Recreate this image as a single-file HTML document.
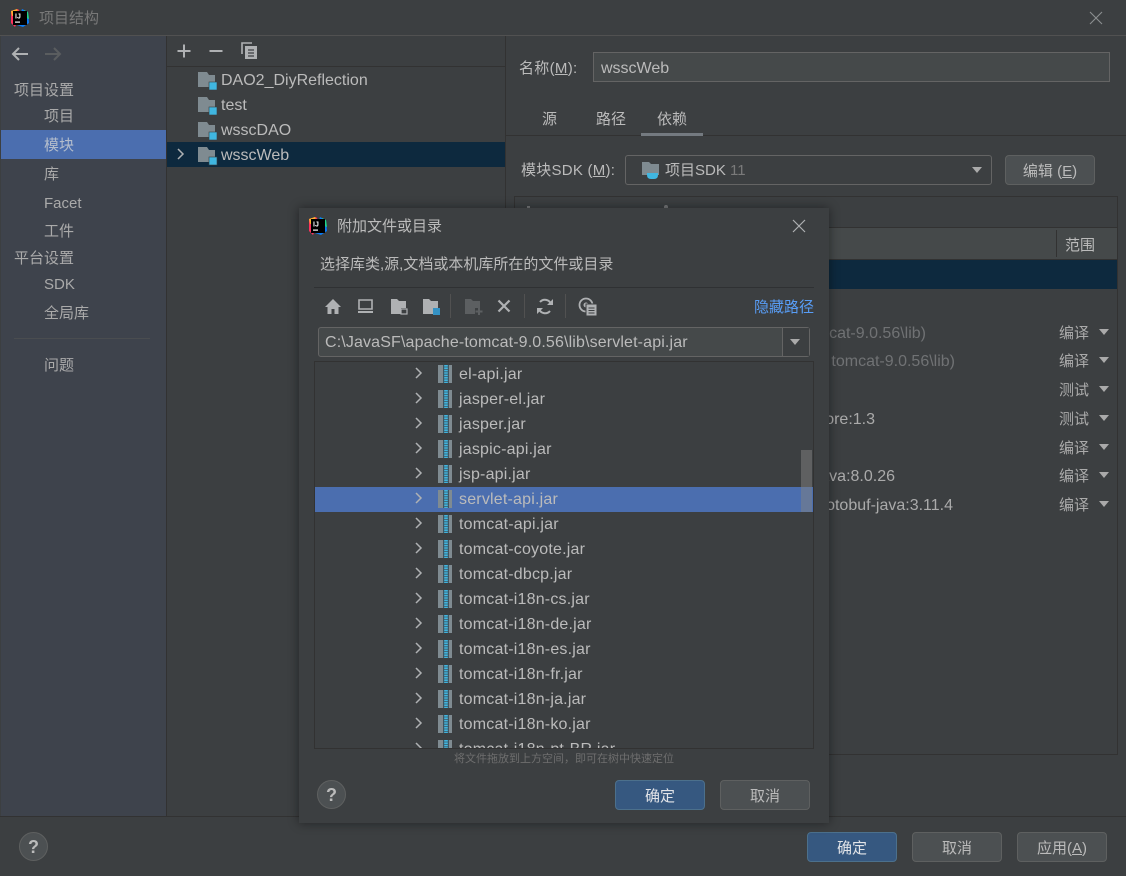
<!DOCTYPE html>
<html lang="zh"><head><meta charset="utf-8"><title>项目结构</title>
<style>
html,body{margin:0;padding:0}
body{width:1126px;height:876px;overflow:hidden;background:#3c3f41;position:relative;font:15px "Liberation Sans","Noto Sans CJK SC",sans-serif;color:#bbb}
.a,.t,svg{position:absolute}
.t{white-space:nowrap;line-height:20px;height:20px;margin-top:4px}
.g{color:#aaa}
.d{color:#707274}
.m{font-size:16px;margin-top:3px}
.btn{position:absolute;box-sizing:border-box;width:90px;height:30px;border:1px solid #5e6060;border-radius:4px;background:#4c5052;text-align:center;line-height:31px;color:#bbb;font-size:15px}
.btn.p{background:#365880;border-color:#4c708c;color:#e2e4e8}
.help{position:absolute;box-sizing:border-box;width:29px;height:29px;border:1px solid #5e6060;border-radius:50%;background:#4c5052;text-align:center;line-height:28px;font-weight:bold;font-size:18px;color:#bbb}
.sc{font-size:15px;color:#aaa}
.tri{position:absolute;width:0;height:0;border-left:5.5px solid transparent;border-right:5.5px solid transparent;border-top:6px solid #aaa}
.r{height:25px;position:absolute;left:0;right:0;margin-top:1px}
.r svg{top:3px}
.r .c{left:99px;top:5px}
.r .j{left:123px}
.r span{position:absolute;left:144px;top:3px;line-height:20px;white-space:nowrap;color:#bbb;font-size:16px;letter-spacing:.2px}
</style></head><body>
<svg width="0" height="0" style="position:absolute"><defs>
<symbol id="mod" viewBox="0 0 20 20"><path d="M0 1h9l2 3h6v12H0z" fill="#7f8b91"/><rect x="11" y="11" width="8" height="8" fill="#40b6e0" stroke="#3c3f41" stroke-width=".6"/></symbol>
<symbol id="jar" viewBox="0 0 14 18"><rect x="0" y="0" width="14" height="18" fill="#7f8b91"/><rect x="5" y="0" width="6" height="18" fill="#3f5560"/><path d="M8 0v18" stroke="#40b6e0" stroke-width="3.6" stroke-dasharray="1.6 .8"/></symbol>
<symbol id="chev" viewBox="0 0 10 12"><path d="M2 1l5 5-5 5" fill="none" stroke="#afb1b3" stroke-width="1.5"/></symbol>
<symbol id="logo" viewBox="0 0 20 20"><path d="M1 3l7-2 3 4-6 14-4-4z" fill="#fe315d"/><path d="M1 3l6-2 2 6-7 1z" fill="#fcb22e"/><path d="M12 1l6 3 1 11-6 4-6-2z" fill="#087cfa"/><path d="M14 2l4 2 1 7-5-2z" fill="#21d789"/><rect x="3" y="3" width="14" height="14" fill="#000"/><text x="5" y="10.5" font-size="7" font-weight="bold" fill="#fff" font-family="Liberation Sans">IJ</text><rect x="5" y="13.5" width="5" height="1.2" fill="#fff"/></symbol>
</defs></svg>

<!-- main title -->
<svg style="left:10px;top:8px" width="20" height="20"><use href="#logo"/></svg>
<div class="t" style="left:39px;top:5px;color:#787878;font-size:15px">项目结构</div>
<svg style="left:1089px;top:11px" width="14" height="14"><path d="M1 1l12 12M13 1L1 13" stroke="#8c8e90" stroke-width="1.1"/></svg>
<div class="a" style="left:0;top:35px;width:1126px;height:1px;background:#515151"></div>

<!-- sidebar -->
<div class="a" style="left:1px;top:36px;width:165px;height:780px;background:#3e434c"></div>
<div class="a" style="left:166px;top:36px;width:1px;height:780px;background:#323232"></div>
<svg style="left:11px;top:46px" width="18" height="16"><path d="M17 8H2M8 2L2 8l6 6" fill="none" stroke="#afb1b3" stroke-width="2"/></svg>
<svg style="left:44px;top:46px" width="18" height="16"><path d="M1 8h15M10 2l6 6-6 6" fill="none" stroke="#5a5d5f" stroke-width="2"/></svg>
<div class="t g" style="left:14px;top:77px">项目设置</div>
<div class="t g" style="left:44px;top:103px">项目</div>
<div class="a" style="left:1px;top:130px;width:165px;height:29px;background:#4b6eaf"></div>
<div class="t" style="left:44px;top:132px;color:#b3bdcc">模块</div>
<div class="t g" style="left:44px;top:161px">库</div>
<div class="t g" style="left:44px;top:190px">Facet</div>
<div class="t g" style="left:44px;top:218px">工件</div>
<div class="t g" style="left:14px;top:245px">平台设置</div>
<div class="t g" style="left:44px;top:271px">SDK</div>
<div class="t g" style="left:44px;top:300px">全局库</div>
<div class="a" style="left:14px;top:338px;width:136px;height:1px;background:#4a4d50"></div>
<div class="t g" style="left:44px;top:352px">问题</div>

<!-- middle -->
<svg style="left:176px;top:43px" width="16" height="16"><path d="M8 1.5v13M1.5 8h13" stroke="#afb1b3" stroke-width="2"/></svg>
<svg style="left:208px;top:43px" width="16" height="16"><path d="M1.5 8h13" stroke="#afb1b3" stroke-width="2"/></svg>
<svg style="left:241px;top:42px" width="17" height="18"><path d="M1 12V1h10" fill="none" stroke="#afb1b3" stroke-width="1.6"/><rect x="4" y="4" width="12" height="13" fill="#afb1b3"/><path d="M7 8h6M7 11h6M7 14h6" stroke="#3c3f41" stroke-width="1.2"/></svg>
<div class="a" style="left:167px;top:66px;width:338px;height:1px;background:#323232"></div>
<svg style="left:198px;top:71px" width="20" height="20"><use href="#mod"/></svg>
<div class="t m" style="left:221px;top:68px">DAO2_DiyReflection</div>
<svg style="left:198px;top:96px" width="20" height="20"><use href="#mod"/></svg>
<div class="t m" style="left:221px;top:93px">test</div>
<svg style="left:198px;top:121px" width="20" height="20"><use href="#mod"/></svg>
<div class="t m" style="left:221px;top:118px">wsscDAO</div>
<div class="a" style="left:167px;top:142px;width:338px;height:25px;background:#0d293e"></div>
<svg style="left:176px;top:148px" width="10" height="12"><use href="#chev"/></svg>
<svg style="left:198px;top:146px" width="20" height="20"><use href="#mod"/></svg>
<div class="t m" style="left:221px;top:143px">wsscWeb</div>
<div class="a" style="left:505px;top:36px;width:1px;height:780px;background:#323232"></div>

<!-- right -->
<div class="t sc" style="left:519px;top:55px;color:#bbb;letter-spacing:.3px">名称(<u>M</u>):</div>
<div class="a" style="left:593px;top:52px;width:517px;height:30px;box-sizing:border-box;background:#45494a;border:1px solid #646464"></div>
<div class="t m" style="left:601px;top:56px">wsscWeb</div>
<div class="t sc" style="left:542px;top:106px;color:#bbb">源</div>
<div class="t sc" style="left:596px;top:106px;color:#bbb">路径</div>
<div class="t sc" style="left:657px;top:106px;color:#bbb">依赖</div>
<div class="a" style="left:506px;top:135px;width:620px;height:1px;background:#323232"></div>
<div class="a" style="left:641px;top:133px;width:62px;height:3px;background:#747a80"></div>
<div class="t sc" style="left:521px;top:157px;color:#bbb;letter-spacing:.25px">模块SDK (<u>M</u>):</div>
<div class="a" style="left:625px;top:155px;width:367px;height:30px;box-sizing:border-box;background:#3c3f41;border:1px solid #646464;border-radius:3px"></div>
<svg style="left:642px;top:161px" width="20" height="19"><path d="M0 1h7l2 2h8v11H0z" fill="#7f8b91"/><path d="M5 12h11v2q0 4-4 4H9q-4 0-4-4z" fill="#40b6e0"/></svg>
<div class="t sc" style="left:665px;top:157px;color:#bbb">项目SDK <span style="color:#7a7a7a">11</span></div>
<div class="tri" style="left:972px;top:167px"></div>
<div class="btn" style="left:1005px;top:155px">编辑 (<u>E</u>)</div>
<div class="a" style="left:514px;top:196px;width:604px;height:559px;box-sizing:border-box;border:1px solid #323232"></div>
<div class="a" style="left:515px;top:227px;width:602px;height:33px;box-sizing:border-box;background:#45494a;border-top:1px solid #323232;border-bottom:1px solid #323232"></div>
<div class="a" style="left:1056px;top:230px;width:1px;height:27px;background:#323232"></div>
<div class="t sc" style="left:1065px;top:232px;color:#bbb">范围</div>
<div class="a" style="left:515px;top:260px;width:602px;height:29px;background:#0d293e"></div>

<div class="t d m" style="right:200px;top:321px">tomcat-9.0.56\lib)</div>
<div class="t d m" style="right:171px;top:349px">tomcat-9.0.56\lib)</div>
<div class="t m" style="right:251px;top:407px;color:#aaa">core:1.3</div>
<div class="t m" style="right:231px;top:464px;color:#aaa">java:8.0.26</div>
<div class="t m" style="right:173px;top:493px;color:#aaa">protobuf-java:3.11.4</div>

<div class="t sc" style="left:1059px;top:320px">编译</div><div class="tri" style="left:1099px;top:329px"></div>
<div class="t sc" style="left:1059px;top:348px">编译</div><div class="tri" style="left:1099px;top:357px"></div>
<div class="t sc" style="left:1059px;top:377px">测试</div><div class="tri" style="left:1099px;top:386px"></div>
<div class="t sc" style="left:1059px;top:406px">测试</div><div class="tri" style="left:1099px;top:415px"></div>
<div class="t sc" style="left:1059px;top:435px">编译</div><div class="tri" style="left:1099px;top:444px"></div>
<div class="t sc" style="left:1059px;top:463px">编译</div><div class="tri" style="left:1099px;top:472px"></div>
<div class="t sc" style="left:1059px;top:492px">编译</div><div class="tri" style="left:1099px;top:501px"></div>

<div class="a" style="left:527px;top:206px;width:3px;height:2px;background:#77797b"></div>
<div class="a" style="left:664px;top:205px;width:4px;height:3px;background:#77797b;border-radius:2px 2px 0 0"></div>

<!-- bottom -->
<div class="a" style="left:0;top:816px;width:1126px;height:1px;background:#323232"></div>
<div class="help" style="left:19px;top:832px">?</div>
<div class="btn p" style="left:807px;top:832px">确定</div>
<div class="btn" style="left:912px;top:832px">取消</div>
<div class="btn" style="left:1017px;top:832px">应用(<u>A</u>)</div>

<!-- dialog -->
<div class="a" style="left:299px;top:208px;width:530px;height:615px;background:#3c3f41;box-shadow:0 0 10px rgba(0,0,0,.45)"></div>
<svg style="left:308px;top:216px" width="20" height="20"><use href="#logo"/></svg>
<div class="t sc" style="left:337px;top:213px;color:#bbb">附加文件或目录</div>
<svg style="left:792px;top:219px" width="14" height="14"><path d="M1 1l12 12M13 1L1 13" stroke="#afb1b3" stroke-width="1.2"/></svg>
<div class="t sc" style="left:320px;top:251px;color:#bbb">选择库类,源,文档或本机库所在的文件或目录</div>
<div class="a" style="left:314px;top:287px;width:500px;height:1px;background:#2f3133"></div>

<svg style="left:324px;top:298px" width="18" height="17"><path d="M9 1L1 9h2.5v7h4v-5h3v5h4V9H17z" fill="#afb1b3"/></svg>
<svg style="left:357px;top:298px" width="17" height="17"><path d="M2 2h13v9H2z" fill="none" stroke="#afb1b3" stroke-width="1.6"/><rect x="1" y="13" width="15" height="2" fill="#afb1b3"/></svg>
<svg style="left:390px;top:298px" width="18" height="17"><path d="M1 1h6l2 2h7v7h-5v6H1z" fill="#afb1b3"/><rect x="11" y="11" width="6" height="5" fill="#3c3f41" stroke="#afb1b3" stroke-width="1.2"/></svg>
<svg style="left:422px;top:298px" width="18" height="17"><path d="M1 1h6l2 2h7v7h-5v6H1z" fill="#afb1b3"/><rect x="11" y="10" width="7" height="7" fill="#3592c4"/></svg>
<div class="a" style="left:450px;top:294px;width:1px;height:24px;background:#515151"></div>
<svg style="left:464px;top:298px" width="19" height="17"><path d="M1 1h6l2 2h7v7h-5v6H1z" fill="#5c5f61"/><path d="M15 10v7M11.500 13.500h7" stroke="#5c5f61" stroke-width="2"/></svg>
<svg style="left:497px;top:299px" width="14" height="14"><path d="M1.500 1.500l11 11M12.500 1.500l-11 11" stroke="#afb1b3" stroke-width="2.200"/></svg>
<div class="a" style="left:524px;top:294px;width:1px;height:24px;background:#515151"></div>
<svg style="left:537px;top:298px" width="16" height="17"><path d="M14 6A6.500 6.500 0 0 0 3 4M2 11a6.500 6.500 0 0 0 11 2" fill="none" stroke="#afb1b3" stroke-width="2"/><path d="M10 7h6V1zM6 10H0v6z" fill="#afb1b3"/></svg>
<div class="a" style="left:565px;top:294px;width:1px;height:24px;background:#515151"></div>
<svg style="left:578px;top:297px" width="20" height="20"><circle cx="8" cy="8" r="6.500" fill="none" stroke="#afb1b3" stroke-width="1.800"/><circle cx="8" cy="8" r="2.500" fill="#afb1b3"/><rect x="8" y="7" width="11" height="12" fill="#afb1b3" stroke="#3c3f41"/><path d="M10.500 11h6M10.500 13.500h6M10.500 16h6" stroke="#3c3f41"/></svg>
<div class="t" style="left:754px;top:294px;color:#589df6;font-size:15px">隐藏路径</div>

<div class="a" style="left:318px;top:327px;width:492px;height:30px;box-sizing:border-box;background:#45494a;border:1px solid #646464;border-radius:3px"></div>
<div class="a" style="left:782px;top:328px;width:1px;height:28px;background:#646464"></div>
<div class="a" style="left:783px;top:328px;width:26px;height:28px;background:#3c3f41"></div>
<div class="tri" style="left:790px;top:339px"></div>
<div class="t m" style="left:325px;top:330px;color:#bbb;letter-spacing:.14px">C:\JavaSF\apache-tomcat-9.0.56\lib\servlet-api.jar</div>

<div class="a" style="left:314px;top:361px;width:500px;height:388px;box-sizing:border-box;border:1px solid #323232;overflow:hidden">
<div class="r" style="top:-1px"><svg class="c" width="10" height="12"><use href="#chev"/></svg><svg class="j" width="14" height="18"><use href="#jar"/></svg><span>el-api.jar</span></div>
<div class="r" style="top:24px"><svg class="c" width="10" height="12"><use href="#chev"/></svg><svg class="j" width="14" height="18"><use href="#jar"/></svg><span>jasper-el.jar</span></div>
<div class="r" style="top:49px"><svg class="c" width="10" height="12"><use href="#chev"/></svg><svg class="j" width="14" height="18"><use href="#jar"/></svg><span>jasper.jar</span></div>
<div class="r" style="top:74px"><svg class="c" width="10" height="12"><use href="#chev"/></svg><svg class="j" width="14" height="18"><use href="#jar"/></svg><span>jaspic-api.jar</span></div>
<div class="r" style="top:99px"><svg class="c" width="10" height="12"><use href="#chev"/></svg><svg class="j" width="14" height="18"><use href="#jar"/></svg><span>jsp-api.jar</span></div>
<div class="r" style="top:124px;background:#4b6eaf"><svg class="c" width="10" height="12"><use href="#chev"/></svg><svg class="j" width="14" height="18"><use href="#jar"/></svg><span>servlet-api.jar</span></div>
<div class="r" style="top:149px"><svg class="c" width="10" height="12"><use href="#chev"/></svg><svg class="j" width="14" height="18"><use href="#jar"/></svg><span>tomcat-api.jar</span></div>
<div class="r" style="top:174px"><svg class="c" width="10" height="12"><use href="#chev"/></svg><svg class="j" width="14" height="18"><use href="#jar"/></svg><span>tomcat-coyote.jar</span></div>
<div class="r" style="top:199px"><svg class="c" width="10" height="12"><use href="#chev"/></svg><svg class="j" width="14" height="18"><use href="#jar"/></svg><span>tomcat-dbcp.jar</span></div>
<div class="r" style="top:224px"><svg class="c" width="10" height="12"><use href="#chev"/></svg><svg class="j" width="14" height="18"><use href="#jar"/></svg><span>tomcat-i18n-cs.jar</span></div>
<div class="r" style="top:249px"><svg class="c" width="10" height="12"><use href="#chev"/></svg><svg class="j" width="14" height="18"><use href="#jar"/></svg><span>tomcat-i18n-de.jar</span></div>
<div class="r" style="top:274px"><svg class="c" width="10" height="12"><use href="#chev"/></svg><svg class="j" width="14" height="18"><use href="#jar"/></svg><span>tomcat-i18n-es.jar</span></div>
<div class="r" style="top:299px"><svg class="c" width="10" height="12"><use href="#chev"/></svg><svg class="j" width="14" height="18"><use href="#jar"/></svg><span>tomcat-i18n-fr.jar</span></div>
<div class="r" style="top:324px"><svg class="c" width="10" height="12"><use href="#chev"/></svg><svg class="j" width="14" height="18"><use href="#jar"/></svg><span>tomcat-i18n-ja.jar</span></div>
<div class="r" style="top:349px"><svg class="c" width="10" height="12"><use href="#chev"/></svg><svg class="j" width="14" height="18"><use href="#jar"/></svg><span>tomcat-i18n-ko.jar</span></div>
<div class="r" style="top:374px"><svg class="c" width="10" height="12"><use href="#chev"/></svg><svg class="j" width="14" height="18"><use href="#jar"/></svg><span>tomcat-i18n-pt-BR.jar</span></div>
<div class="a" style="left:486px;top:88px;width:11px;height:62px;background:rgba(130,130,130,.5)"></div>
</div>
<div class="t" style="left:454px;top:745px;font-size:11px;color:#6e6e6e">将文件拖放到上方空间，即可在树中快速定位</div>
<div class="help" style="left:317px;top:780px">?</div>
<div class="btn p" style="left:615px;top:780px">确定</div>
<div class="btn" style="left:720px;top:780px">取消</div>
</body></html>
